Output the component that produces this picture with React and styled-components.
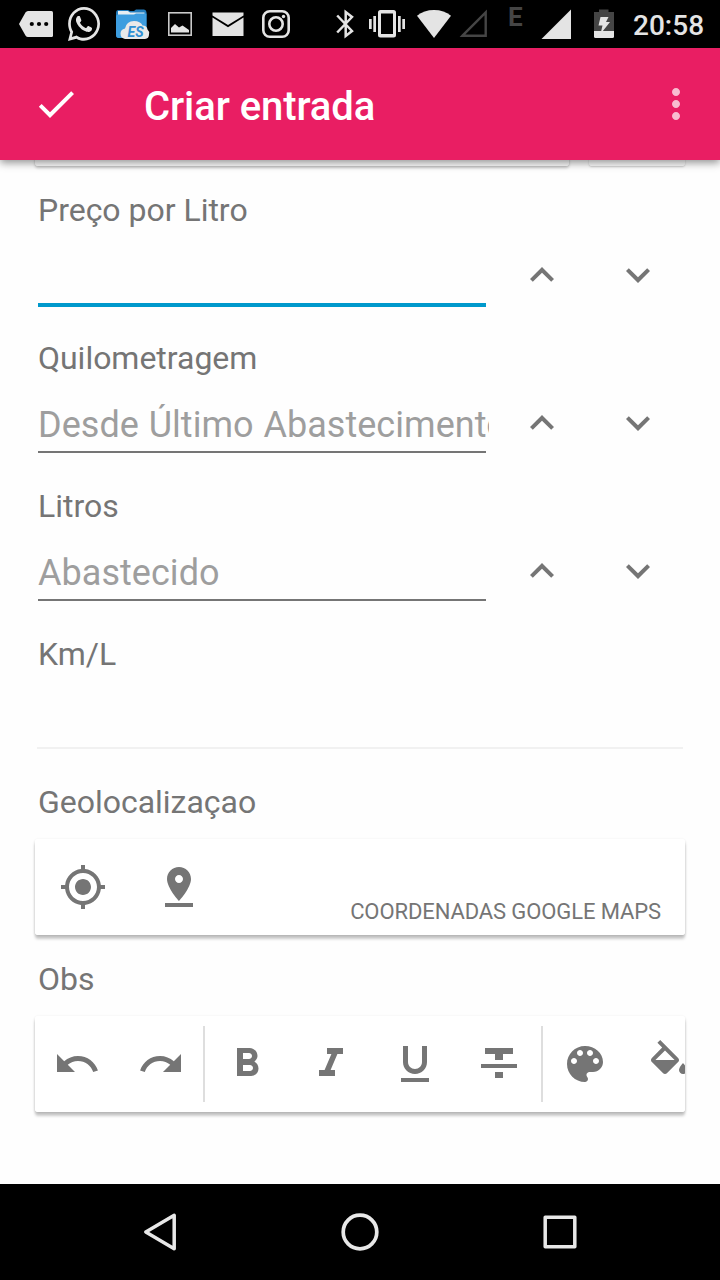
import React from "react";
import styled, { createGlobalStyle } from "styled-components";
import { FaWhatsapp } from "react-icons/fa";

const GlobalStyle = createGlobalStyle`
  * { box-sizing: border-box; }
  body { margin: 0; background: #fefefe; font-family: Roboto, "Liberation Sans", sans-serif; }
  svg { display: block; flex: none; }
`;

const Screen = styled.div`
  width: 720px;
  height: 1280px;
  display: flex;
  flex-direction: column;
  overflow: hidden;
  background: #fefefe;
`;

const StatusBar = styled.div`
  flex: none;
  height: 48px;
  background: #000;
  display: flex;
  align-items: center;
  padding-left: 19px;
  color: #e4e4e4;
`;

const StatusSlot = styled.div`
  flex: none;
  width: ${(p) => p.$w}px;
  margin-right: ${(p) => p.$gap}px;
`;

const WhatsappIcon = styled(FaWhatsapp)`
  width: 32px;
  height: 34px;
`;

const NetworkType = styled.span`
  flex: none;
  width: 18px;
  margin-right: 15px;
  align-self: flex-start;
  padding-top: 2px;
  font-size: 26px;
  line-height: 31px;
  font-weight: 700;
  color: #454545;
`;

const Clock = styled.span`
  font-size: 28px;
  line-height: 34px;
  font-weight: 500;
  padding-top: 4px;
`;

const AppBar = styled.header`
  flex: none;
  position: relative;
  z-index: 1;
  height: 112px;
  display: flex;
  align-items: center;
  padding: 0 20px 0 32px;
  background: #e91e63;
  color: #fff;
  box-shadow: 0 3px 8px rgba(0, 0, 0, 0.42);
`;

const Title = styled.h1`
  flex: 1;
  margin: 0 0 0 64px;
  padding-top: 6px;
  font-size: 40px;
  line-height: 48px;
  font-weight: 500;
  letter-spacing: -0.07px;
`;

const MenuButton = styled.div`
  opacity: 0.7;
`;

const Content = styled.main`
  flex: 1;
  min-height: 0;
  overflow: hidden;
  padding: 0 35px;
  color: #757575;
`;

const Card = styled.div`
  display: flex;
  height: 96px;
  width: ${(p) => (p.$width ? `${p.$width}px` : "auto")};
  overflow: hidden;
  background: #fff;
  border-radius: 3px;
`;

const shadows = {
  flat: "0 1px 2px rgba(0, 0, 0, 0.2)",
  low: "0 2px 3px rgba(0, 0, 0, 0.22), 0 0 2px rgba(0, 0, 0, 0.1)",
  raised: "0 4px 3px rgba(0, 0, 0, 0.2), 0 1px 3px rgba(0, 0, 0, 0.14)",
};

const CardShadow = styled.div`
  border-radius: 3px;
  box-shadow: ${(p) => shadows[p.$level || "raised"]};
`;

const ScrolledCards = styled.div`
  display: flex;
  justify-content: space-between;
  margin: -90px 0 25px;
`;

const Label = styled.div`
  height: 38px;
  padding-left: 3px;
  font-size: 32px;
  line-height: 38px;
  letter-spacing: -0.02px;
`;

const Field = styled.section`
  height: 148px;
`;

const Group = styled.section`
  display: flex;
  flex-direction: column;
  gap: 18px;
  margin-bottom: 25px;
`;

const EntryRow = styled.div`
  display: flex;
  height: 92px;
  padding-left: 3px;
`;

const Input = styled.div`
  width: 448px;
  height: ${(p) => (p.$active ? 78 : 76)}px;
  margin-right: 8px;
  padding-top: 27px;
  border-bottom: ${(p) => (p.$active ? "4px solid #0099cc" : "2px solid #757575")};
  font-size: 36px;
  line-height: 42px;
  color: #9e9e9e;
`;

const Hint = styled.div`
  width: 451px;
  overflow: hidden;
  white-space: nowrap;
  word-spacing: 0.8px;
  letter-spacing: 0.04px;
`;

const Result = styled.div`
  height: 76px;
  margin: 0 2px;
  border-bottom: 2px solid #f1f1f1;
`;

const IconButton = styled.div`
  flex: none;
  width: ${(p) => p.$w}px;
  display: flex;
  align-items: center;
  justify-content: center;
`;

const Divider = styled.div`
  flex: none;
  width: 2px;
  height: 76px;
  margin-top: 10px;
  background: #dedede;
`;

const CardAction = styled.div`
  margin: auto 24px 10px auto;
  font-size: 22px;
  line-height: 26px;
  letter-spacing: -0.1px;
`;

const NavBar = styled.nav`
  flex: none;
  height: 96px;
  background: #000;
  display: flex;
  align-items: center;
  padding: 0 60px;
`;

const NavButton = styled.div`
  width: 200px;
  display: flex;
  justify-content: center;
`;

const icons = {
  check: "M9 16.17L4.83 12l-1.42 1.41L9 19 21 7l-1.41-1.41z",
  more: "M12 8c1.1 0 2-.9 2-2s-.9-2-2-2-2 .9-2 2 .9 2 2 2zm0 2c-1.1 0-2 .9-2 2s.9 2 2 2 2-.9 2-2-.9-2-2-2zm0 6c-1.1 0-2 .9-2 2s.9 2 2 2 2-.9 2-2-.9-2-2-2z",
  up: "M12 8l-6 6 1.41 1.41L12 10.83l4.59 4.58L18 14z",
  down: "M16.59 8.59L12 13.17 7.41 8.59 6 10l6 6 6-6z",
  location: "M12 8c-2.21 0-4 1.79-4 4s1.79 4 4 4 4-1.79 4-4-1.79-4-4-4zm8.94 3c-.46-4.17-3.77-7.48-7.94-7.94V1h-2v2.06C6.83 3.52 3.52 6.83 3.06 11H1v2h2.06c.46 4.17 3.77 7.48 7.94 7.94V23h2v-2.06c4.17-.46 7.48-3.77 7.94-7.94H23v-2h-2.06zM12 19c-3.87 0-7-3.13-7-7s3.13-7 7-7 7 3.13 7 7-3.13 7-7 7z",
  pin: "M18 8c0-3.31-2.69-6-6-6S6 4.69 6 8c0 4.5 6 11 6 11s6-6.5 6-11zm-8 0c0-1.1.9-2 2-2s2 .9 2 2-.89 2-2 2c-1.1 0-2-.9-2-2zM5 20v2h14v-2H5z",
  undo: "M12.5 8c-2.65 0-5.05.99-6.9 2.6L2 7v9h9l-3.62-3.62c1.39-1.16 3.16-1.88 5.12-1.88 3.54 0 6.55 2.31 7.6 5.5l2.37-.78C21.08 11.03 17.15 8 12.5 8z",
  redo: "M18.4 10.6C16.55 8.99 14.15 8 11.5 8c-4.65 0-8.58 3.03-9.96 7.22L3.9 16c1.05-3.19 4.05-5.5 7.6-5.5 1.95 0 3.73.72 5.12 1.88L13 16h9V7l-3.6 3.6z",
  bold: "M15.6 10.79c.97-.67 1.65-1.77 1.65-2.79 0-2.26-1.75-4-4-4H7v14h7.04c2.09 0 3.71-1.7 3.71-3.79 0-1.52-.86-2.82-2.15-3.42zM10 6.5h3c.83 0 1.5.67 1.5 1.5s-.67 1.5-1.5 1.5h-3v-3zm3.5 9H10v-3h3.5c.83 0 1.5.67 1.5 1.5s-.67 1.5-1.5 1.5z",
  italic: "M10 4v3h2.21l-3.42 8H6v3h8v-3h-2.21l3.42-8H18V4z",
  underline: "M12 17c3.31 0 6-2.69 6-6V3h-2.5v8c0 1.93-1.57 3.5-3.5 3.5S8.5 12.93 8.5 11V3H6v8c0 3.31 2.69 6 6 6zm-7 2v2h14v-2H5z",
  strike: "M10 19h4v-3h-4v3zM5 4v3h5v3h4V7h5V4H5zM3 14h18v-2H3v2z",
  palette: "M12 3c-4.97 0-9 4.03-9 9s4.03 9 9 9c.83 0 1.5-.67 1.5-1.5 0-.39-.15-.74-.39-1.01-.23-.26-.38-.61-.38-.99 0-.83.67-1.5 1.5-1.5H16c2.76 0 5-2.24 5-5 0-4.42-4.03-8-9-8zm-5.5 9c-.83 0-1.5-.67-1.5-1.5S5.67 9 6.5 9 8 9.67 8 10.5 7.33 12 6.5 12zm3-4C8.67 8 8 7.33 8 6.5S8.67 5 9.5 5s1.5.67 1.5 1.5S10.33 8 9.5 8zm5 0c-.83 0-1.5-.67-1.5-1.5S13.67 5 14.5 5s1.5.67 1.5 1.5S15.33 8 14.5 8zm3 4c-.83 0-1.5-.67-1.5-1.5S16.67 9 17.5 9s1.5.67 1.5 1.5-.67 1.5-1.5 1.5z",
  fill: "M16.56 8.94L7.62 0 6.21 1.41l2.38 2.38-5.15 5.15c-.59.59-.59 1.54 0 2.12l5.5 5.5c.29.29.68.44 1.06.44s.77-.15 1.06-.44l5.5-5.5c.59-.58.59-1.53 0-2.12zM5.21 10L10 5.21 14.79 10H5.21zM19 11.5s-2 2.17-2 3.5c0 1.1.9 2 2 2s2-.9 2-2c0-1.33-2-3.5-2-3.5z",
};

const Icon = ({ name }) => (
  <svg width="48" height="48" viewBox="0 0 24 24" fill="currentColor">
    <path d={icons[name]} />
  </svg>
);

const StatusIcon = ({ w, gap, children }) => (
  <StatusSlot $w={w} $gap={gap}>
    <svg width={w} height="48" viewBox={`0 0 ${w} 48`} fill="currentColor">
      {children}
    </svg>
  </StatusSlot>
);

const Status = () => (
  <StatusBar>
    <StatusIcon w={34} gap={15}>
      <path d="M9 11H32.5Q34 11 34 12.500V35.500Q34 37 32.500 37H9Q7.500 37 6.500 35.500L0 24L6.500 12.500Q7.500 11 9 11Z" />
      <g fill="#000">
        <circle cx="12.800" cy="24" r="2.100" />
        <circle cx="20" cy="24" r="2.100" />
        <circle cx="27.200" cy="24" r="2.100" />
      </g>
    </StatusIcon>
    <StatusSlot $w={32} $gap={16}>
      <WhatsappIcon viewBox="0 32 448 448" preserveAspectRatio="none" />
    </StatusSlot>
    <StatusIcon w={34} gap={18}>
      <path d="M2.500 10H12L14 11H18L20 9.500H28Q30 9.500 30.500 12V35Q30 38 29 38H3Q0 38 0 35V13Q0 10 2.500 10Z" fill="#237dbd" />
      <path d="M2 11H12L14 12.500H28.500V16H2Z" fill="#e8eef2" />
      <path d="M0 16.500Q0 14.500 2 14.500H18L20 13.500H30.500V35Q30.500 38 28 38H3Q0 38 0 35Z" fill="#3d9ddf" />
      <path d="M9 39Q4.500 38 4.500 33.500Q4.500 29.500 9 28.500Q10.500 21 18 21Q24.500 21 26.500 25.500Q31 25.500 31.500 29.500Q33.500 31 33 34.500Q33 38.500 29 39Z" fill="#e9e9e9" />
      <text x="11.500" y="37" fontFamily="Roboto, sans-serif" fontWeight="700" fontStyle="italic" fontSize="14" textLength="16" lengthAdjust="spacingAndGlyphs" fill="#2f8fd4">ES</text>
    </StatusIcon>
    <StatusIcon w={24} gap={20}>
      <rect x="0.800" y="12.800" width="22.400" height="22.400" fill="none" stroke="#c9c9c9" strokeWidth="1.600" />
      <path d="M3 32.500V28L7 24L11 27.500L14.500 25.500L21 30V32.500Z" />
    </StatusIcon>
    <StatusIcon w={32} gap={18}>
      <path d="M0.500 12.500H31.500V15.500L16 25L0.500 15.500Z" />
      <path d="M0.500 17.500L16 27.300L31.500 17.500V36H0.500Z" />
    </StatusIcon>
    <StatusIcon w={28} gap={46}>
      <rect x="1.300" y="11.300" width="25.400" height="25.400" rx="6.500" fill="none" stroke="currentColor" strokeWidth="2.600" />
      <circle cx="14" cy="24" r="6.700" fill="none" stroke="currentColor" strokeWidth="2.600" />
      <circle cx="21.500" cy="16.500" r="1.700" />
    </StatusIcon>
    <StatusIcon w={19} gap={14}>
      <path d="M1.200 15.500L16 31L9.700 36V12L16 17L1.200 32.500" fill="none" stroke="currentColor" strokeWidth="2.500" />
    </StatusIcon>
    <StatusIcon w={36} gap={12}>
      <path fillRule="evenodd" d="M11.500 10H24.500Q27 10 27 12.500V35Q27 37.500 24.500 37.500H11.500Q9 37.500 9 35V12.500Q9 10 11.500 10ZM12 13.500V34H24V13.500Z" />
      <path d="M4.300 16H7V32H4.300ZM0 19H2.700V29H0ZM29 16H31.700V32H29ZM33.300 19H36V29H33.300Z" />
    </StatusIcon>
    <StatusIcon w={34} gap={8}>
      <path d="M17 38L0 15.700Q7 10 17 10T34 15.700Z" />
    </StatusIcon>
    <StatusIcon w={28} gap={21}>
      <path d="M3.500 35.700L26.700 12.500V35.700Z" fill="none" stroke="#454545" strokeWidth="2.400" />
    </StatusIcon>
    <NetworkType>E</NetworkType>
    <StatusIcon w={30} gap={23}>
      <path d="M0.500 39L30 9.500V39Z" />
    </StatusIcon>
    <StatusIcon w={20} gap={19}>
      <path d="M0 12H5V9.500H14.500V12H20V31H0Z" fill="#454545" />
      <path d="M0 31H20V36.500Q20 38 18.500 38H1.500Q0 38 0 36.500Z" />
      <path d="M6.500 17H14.500L12 22H16L6.500 34L8.500 25.500H4.500Z" />
    </StatusIcon>
    <Clock>20:58</Clock>
  </StatusBar>
);

const NumberField = ({ label, hint, active }) => (
  <Field>
    <Label>{label}</Label>
    <EntryRow>
      <Input $active={active}>
        <Hint>{hint}</Hint>
      </Input>
      <IconButton $w={96}><Icon name="up" /></IconButton>
      <IconButton $w={96}><Icon name="down" /></IconButton>
    </EntryRow>
  </Field>
);

export default function App() {
  return (
    <Screen>
      <GlobalStyle />
      <Status />
      <AppBar>
        <Icon name="check" />
        <Title>Criar entrada</Title>
        <MenuButton><Icon name="more" /></MenuButton>
      </AppBar>
      <Content>
        <ScrolledCards>
          <CardShadow $level="low"><Card $width={534} /></CardShadow>
          <CardShadow $level="flat"><Card $width={96} /></CardShadow>
        </ScrolledCards>
        <NumberField label="Preço por Litro" active />
        <NumberField label="Quilometragem" hint="Desde Último Abastecimento" />
        <NumberField label="Litros" hint="Abastecido" />
        <Field>
          <Label>Km/L</Label>
          <Result />
        </Field>
        <Group>
          <Label>Geolocalizaçao</Label>
          <CardShadow>
            <Card>
              <IconButton $w={96}><Icon name="location" /></IconButton>
              <IconButton $w={96}><Icon name="pin" /></IconButton>
              <CardAction>COORDENADAS GOOGLE MAPS</CardAction>
            </Card>
          </CardShadow>
        </Group>
        <Group>
          <Label>Obs</Label>
          <CardShadow>
            <Card>
              <IconButton $w={84}><Icon name="undo" /></IconButton>
              <IconButton $w={84}><Icon name="redo" /></IconButton>
              <Divider />
              <IconButton $w={84}><Icon name="bold" /></IconButton>
              <IconButton $w={84}><Icon name="italic" /></IconButton>
              <IconButton $w={84}><Icon name="underline" /></IconButton>
              <IconButton $w={84}><Icon name="strike" /></IconButton>
              <Divider />
              <IconButton $w={84}><Icon name="palette" /></IconButton>
              <IconButton $w={84}><Icon name="fill" /></IconButton>
            </Card>
          </CardShadow>
        </Group>
      </Content>
      <NavBar>
        <NavButton>
          <svg width="40" height="40" viewBox="0 0 40 40" fill="none" stroke="#e8e8e8" strokeWidth="3.500" strokeLinejoin="round">
            <path d="M5.800 20L34.200 3.300V36.700Z" />
          </svg>
        </NavButton>
        <NavButton>
          <svg width="40" height="40" viewBox="0 0 40 40" fill="none" stroke="#e8e8e8" strokeWidth="3.700">
            <circle cx="20" cy="20" r="16.800" />
          </svg>
        </NavButton>
        <NavButton>
          <svg width="40" height="40" viewBox="0 0 40 40" fill="none" stroke="#e8e8e8" strokeWidth="3.500" strokeLinejoin="round">
            <rect x="5.200" y="5.200" width="29.600" height="29.600" />
          </svg>
        </NavButton>
      </NavBar>
    </Screen>
  );
}
